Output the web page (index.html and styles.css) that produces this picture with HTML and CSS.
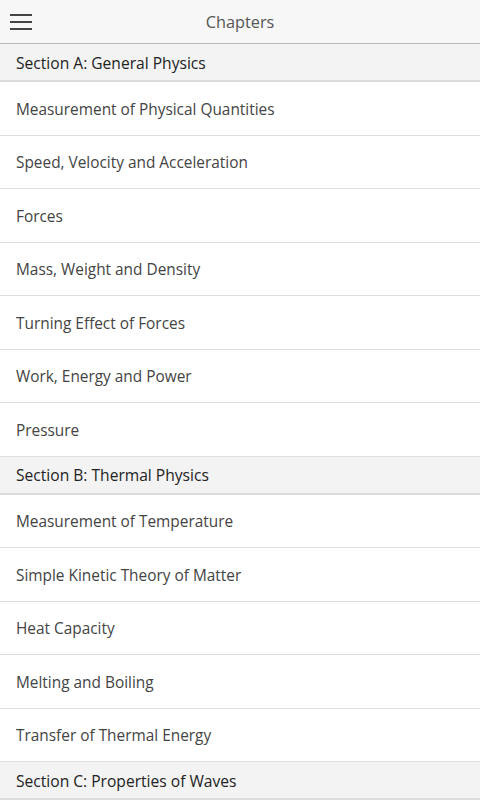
FILE: index.html
```html
<!DOCTYPE html>
<html lang="en">
<head>
    <meta charset="UTF-8">
    <title>Chapters</title>
    <link rel="stylesheet" href="styles.css">
</head>
<body>
    <div class="app">
        <header class="topbar">
            <button class="menu-btn" aria-label="Menu">
                <svg width="22" height="16" viewBox="0 0 22 16">
                    <rect x="0" y="0" width="22" height="2" fill="#444"/>
                    <rect x="0" y="7" width="22" height="2" fill="#444"/>
                    <rect x="0" y="14" width="22" height="2" fill="#444"/>
                </svg>
            </button>
            <h1 class="title">Chapters</h1>
        </header>
        <ul class="chapters">
            <li class="section">Section A: General Physics</li>
            <li class="chapter">Measurement of Physical Quantities</li>
            <li class="chapter">Speed, Velocity and Acceleration</li>
            <li class="chapter">Forces</li>
            <li class="chapter">Mass, Weight and Density</li>
            <li class="chapter">Turning Effect of Forces</li>
            <li class="chapter">Work, Energy and Power</li>
            <li class="chapter">Pressure</li>
            <li class="section">Section B: Thermal Physics</li>
            <li class="chapter">Measurement of Temperature</li>
            <li class="chapter">Simple Kinetic Theory of Matter</li>
            <li class="chapter">Heat Capacity</li>
            <li class="chapter">Melting and Boiling</li>
            <li class="chapter">Transfer of Thermal Energy</li>
            <li class="section">Section C: Properties of Waves</li>
        </ul>
    </div>
</body>
</html>
```

FILE: styles.css
```css
body {
    margin: 0;
    background-color: #fff;
    font-family: "Open Sans", "Noto Sans", sans-serif;
    color: #444;
    overflow: hidden;
}
.app {
    display: flex;
    flex-direction: column;
}
.topbar {
    position: relative;
    display: flex;
    align-items: center;
    justify-content: center;
    height: 43px;
    background: #f7f7f7;
    border-bottom: 1px solid #b8b8b8;
}
.menu-btn {
    position: absolute;
    left: 10px;
    top: 14px;
    padding: 0;
    border: none;
    background: none;
    line-height: 0;
    cursor: pointer;
}
.title {
    margin: 1px 0 0 0;
    font-size: 16.3px;
    font-weight: normal;
    color: #555;
}
.chapters {
    list-style: none;
    margin: 0;
    padding: 0;
}
.section {
    display: flex;
    align-items: center;
    height: 35px;
    padding: 1px 16px 0;
    background: #f3f3f3;
    border-bottom: 2px solid #dcdcdc;
    font-size: 15.6px;
    color: #222;
}
.chapter {
    display: flex;
    align-items: center;
    height: 50.5px;
    padding: 2px 16px 0;
    border-bottom: 1px solid #dedede;
    font-size: 15.4px;
    color: #444;
}
```
